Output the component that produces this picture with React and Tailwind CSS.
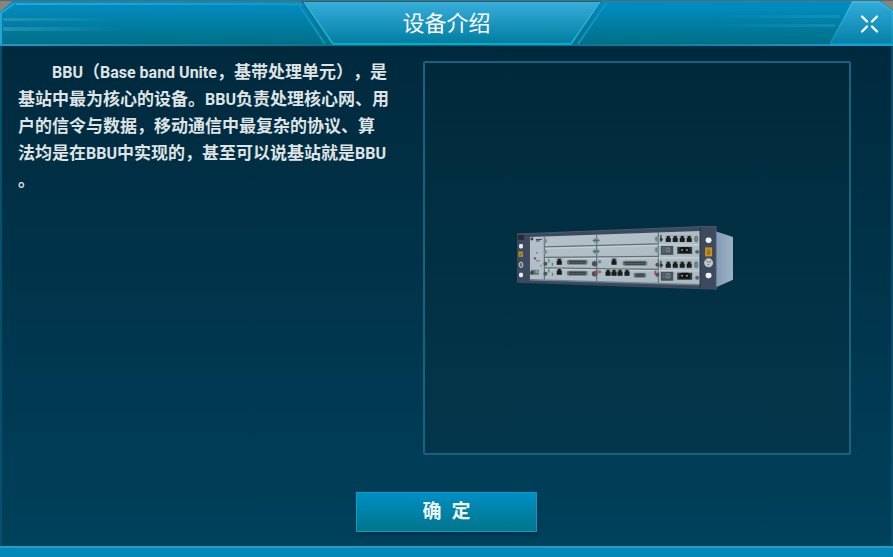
const earParts = [
  { y: 246, kind: 'screw' },
  { y: 254, kind: 'label' },
  { y: 265, kind: 'ring' },
  { y: 275, kind: 'screw' },
]

const rightModules = [0, 26]

function Connector({ x, y, width }) {
  return (
    <g>
      <rect x={x} y={y} width={width} height="5" rx="2" fill="#6d7b82" />
      <rect x={x + 2} y={y + 1} width={width - 4} height="3" rx="1" fill="#303a3e" />
      <path d={`M${x + 3} ${y + 2.5}h${width - 6}`} stroke="#9aa59f" strokeWidth="0.8" strokeDasharray="1 1" />
    </g>
  )
}

function Port({ x, y, size = 5 }) {
  return (
    <g>
      <rect x={x - 0.5} y={y - 1} width={size + 1} height={size + 2} fill="#98a6a5" />
      <path d={`M${x} ${y + 2}h1v-2h${size - 2}v2h1v${size - 1}h-${size}z`} fill="#171e22" />
    </g>
  )
}

function BbuDevice() {
  return (
    <svg viewBox="516 226 217 65" className="w-[54%]" role="img" aria-label="BBU">
      <defs>
        <linearGradient id="side" x1="0" x2="1">
          <stop offset="0" stopColor="#8199b2" />
          <stop offset="1" stopColor="#9db2c8" />
        </linearGradient>
        <linearGradient id="plate" x1="0" x2="1" y2="1">
          <stop offset="0" stopColor="#b4c3c9" />
          <stop offset="1" stopColor="#abbac1" />
        </linearGradient>
      </defs>
      <path d="M715 231L733 237V280L715 288z" fill="url(#side)" />
      <path d="M516 234L716 226V290L516 283z" fill="#3d4a5e" />
      <path d="M516 234L716 226V290" fill="none" stroke="#536277" strokeWidth="0.8" />
      <path d="M529 237L700 231V285L529 280z" fill="url(#plate)" />
      <path d="M543 247L658 244M543 257.500L658 256.500M543 268L658 269.500" stroke="#617078" strokeWidth="1.200" fill="none" />
      <path d="M543 248.500L658 245.500M543 259L658 258M543 269.500L658 271" stroke="#ced8da" strokeWidth="0.800" fill="none" />
      <path d="M543.500 237V280M596 235V282M658 232V284" stroke="#647681" strokeWidth="1.200" />
      <path d="M658 245H700M658 258H700M658 271H700" stroke="#d0d8dc" strokeWidth="1" />
      <path d="M529 280L700 285" stroke="#738089" strokeWidth="1.500" />

      <rect x="517" y="235" width="6" height="5" fill="#232c33" />
      {earParts.map((part) => (
        <g key={part.y}>
          {part.kind === 'screw' && <rect x="518" y={part.y - 2} width="4" height="4.500" rx="1.500" fill="#e6edf0" />}
          {part.kind === 'label' && <rect x="517.500" y={part.y - 2.5} width="4.500" height="5.500" fill="#b38b2c" />}
          {part.kind === 'ring' && <ellipse cx="520" cy={part.y} rx="1.800" ry="2.800" fill="#5f6b70" stroke="#c4cecf" />}
        </g>
      ))}
      <path d="M519 256l2-3" stroke="#705a24" />

      <circle cx="531" cy="239" r="1.500" fill="#354349" />
      <path d="M535 239.500h6M535 241h4" stroke="#39464d" strokeWidth="1" />
      <circle cx="536" cy="253" r="1" fill="#7a8b93" />
      <circle cx="534" cy="258.500" r="1.200" fill="#853f4c" />
      <path d="M535 261h4M539 266h2" stroke="#697980" />
      <rect x="530" y="270" width="8" height="5" fill="#65757d" />
      <circle cx="531" cy="273" r="2" fill="#3d4a51" />
      <circle cx="536" cy="272" r="1.500" fill="#8d9ca1" />

      {[241, 252].map((y) => (
        <g key={y} fill="#71838c" stroke="#8c9da5" strokeWidth="0.800">
          <ellipse cx="544.500" cy={y} rx="1.500" ry="2" />
          <ellipse cx="595.500" cy={y - 0.5} rx="3" ry="2.200" />
          <ellipse cx="656.500" cy={y - 2} rx="2" ry="2.500" />
          <path d={`M592 ${y - 0.5}h7`} stroke="#52656f" />
        </g>
      ))}
      {[264, 274].map((y) => (
        <g key={y} fill="#4a5358">
          <circle cx="544.500" cy={y} r="2" />
          <circle cx="594" cy={y} r="2.800" />
          <circle cx="599" cy={y - 2} r="1.800" fill="#738089" />
          <circle cx="657" cy={y + 1} r="2" />
          <path d={`M548 ${y - 5}v4M551.500 ${y - 1}v3`} stroke="#65757d" strokeWidth="1.200" />
        </g>
      ))}
      <path d="M596 270v5M655 271v4" stroke="#bd3d5b" strokeWidth="2" />

      <Port x={556} y={259} />
      <Port x={556} y={269} />
      <Port x={611} y={259} />
      <Connector x={566} y={260} width={21} />
      <Connector x={566} y={271} width={21} />
      <Connector x={622} y={261} width={25} />
      {[605, 611, 617, 624].map((x) => <Port key={x} x={x} y={270} />)}
      <Connector x={633} y={273} width={13} />

      {rightModules.map((dy) => (
        <g key={dy} transform={`translate(0 ${dy})`}>
          <path d="M660.500 235v7" stroke="#59656c" strokeWidth="2" />
          <circle cx="661" cy="239.500" r="1.500" fill="#303a40" />
          {[665.5, 672.5, 679.5, 686.5].map((x) => <Port key={x} x={x} y={236} />)}
          <ellipse cx="696" cy="239" rx="1.500" ry="3" fill="#7d8e98" stroke="#4b5c66" strokeWidth="0.800" />
          <rect x="660.500" y="246" width="12.500" height="9" fill="#48545d" />
          <path d="M662 248h8M662 250h3M662 252h8" stroke="#6b7980" strokeWidth="0.800" />
          <circle cx="668" cy="250" r="1.800" fill="none" stroke="#9ba5a6" strokeWidth="0.800" />
          <path d="M677 247h15v7h-15z" fill="#30373a" />
          <path d="M679 249l2-2h7l2 2v4h-11z" fill="#111719" />
          <path d="M681 250h1.500M686 250h1.500" stroke="#d5c395" strokeWidth="1.500" />
          <circle cx="697" cy="252" r="2" fill="#56646c" />
        </g>
      ))}
      <path d="M700 227V288" stroke="#29343f" strokeWidth="1.200" />
      <rect x="705.500" y="237.500" width="6" height="5.500" rx="2.500" fill="#edf2f4" />
      <rect x="705" y="247.500" width="7" height="9" fill="#c8941c" />
      <path d="M707 250h3M707 252h3l-3 2h3" stroke="#836119" fill="none" />
      <circle cx="708.500" cy="263" r="4.500" fill="#bdc7cb" />
      <path d="M706 260.500l2 2 3-1M707 265.500l2-1" stroke="#717c7e" fill="none" />
      <rect x="705.500" y="273" width="6" height="5.500" rx="2.500" fill="#edf2f4" />
    </svg>
  )
}

function TitlePlate() {
  return (
    <svg viewBox="287 0 320 45" className="absolute top-0 left-1/2 h-[45px] w-[320px] -translate-x-1/2" aria-hidden="true">
      <defs>
        <linearGradient id="title-fill" x2="0" y2="1">
          <stop stopColor="#37aedb" />
          <stop offset="1" stopColor="#007da0" />
        </linearGradient>
        <linearGradient id="title-line" x2="0" y2="1">
          <stop stopColor="#35add8" />
          <stop offset="1" stopColor="#0bbdd2" />
        </linearGradient>
      </defs>
      <path d="M287 4h12L325 43M607 4h-2L578 43" stroke="#1593bf" strokeWidth="2" fill="none" />
      <path d="M301 0L331 44H573L602 0z" fill="#006e8c" />
      <path d="M304 1L333 43H571L600 1z" fill="url(#title-fill)" />
      <path d="M304 1L333 43H571L600 1" fill="none" stroke="url(#title-line)" strokeWidth="1.500" />
    </svg>
  )
}

function CloseButton() {
  return (
    <button type="button" aria-label="关闭" className="relative h-[45px] w-[63px] cursor-pointer">
      <svg viewBox="830 1 63 45" className="h-full w-full" aria-hidden="true">
        <defs>
          <linearGradient id="close-fill" x2="0" y2="1">
            <stop stopColor="#31add9" />
            <stop offset="1" stopColor="#047fa7" />
          </linearGradient>
          <linearGradient id="close-edge" x2="0" y2="1">
            <stop stopColor="#35bce9" />
            <stop offset="1" stopColor="#138caf" />
          </linearGradient>
        </defs>
        <path d="M852 1H879L893 11V45H830z" fill="url(#close-fill)" />
        <path d="M830 44L853 2H879L892 11V44" fill="none" stroke="url(#close-edge)" strokeWidth="1.500" />
        <path d="M830 44.500H893" stroke="#12a2d5" strokeWidth="2" />
        <path d="M879 0h14v10z" fill="#858580" />
        <path d="M862 16.500l5 5M872 26.500l5 5M877 16.500l-5 5M867 26.500l-5 5" stroke="#fff" strokeWidth="2.400" strokeLinecap="round" />
      </svg>
    </button>
  )
}

function Header() {
  return (
    <header className="relative flex h-[46px] justify-between border-t border-[#626667] bg-linear-to-b from-[#008fc5] to-[#006e85]">
      <div className="absolute inset-x-0 bottom-0 h-0.5 bg-linear-to-r from-[#169dcd] via-[#006780] to-[#12a2d5]" />
      <div className="absolute inset-x-4 top-[2px] h-0.5 bg-linear-to-r from-[#28a8d8] via-[#078dbd] to-[#0089bd]" />
      <TitlePlate />
      <svg viewBox="0 1 130 45" className="relative h-[45px] w-[130px]" aria-hidden="true">
        <defs>
          <linearGradient id="streak-left">
            <stop stopColor="#329ab6" stopOpacity="0.700" />
            <stop offset="1" stopColor="#329ab6" stopOpacity="0" />
          </linearGradient>
        </defs>
        <path d="M0 0H14L0 12z" fill="#858580" />
        <path d="M1 44V13L15 3" fill="none" stroke="#24a5d5" strokeWidth="2" />
        <path d="M3 18h117v3H3zM3 27h117v4H3z" fill="url(#streak-left)" />
      </svg>
      <h1 className="absolute inset-0 flex items-center justify-center pb-1 font-['Noto_Sans_CJK_SC',sans-serif] text-[22px] font-normal text-white">
        设备介绍
      </h1>
      <div className="relative flex">
        <div className="-mr-5 flex w-[140px] flex-col gap-[6px] pt-[14px] pr-[10px]">
          <div className="h-[3px] bg-linear-to-r from-transparent to-[#289abc]/50" />
          <div className="mr-[5px] h-[3px] bg-linear-to-r from-transparent to-[#289abc]/50" />
        </div>
        <CloseButton />
      </div>
    </header>
  )
}

function Latin({ children }) {
  return <span className="text-[16px] leading-none">{children}</span>
}

export default function App() {
  return (
    <div className="flex min-h-screen flex-col bg-[#00293d] font-[Roboto,'Noto_Sans_CJK_SC',sans-serif]">
      <Header />
      <main className="flex flex-1 flex-col items-center border-x-2 border-[#06506e] bg-linear-to-b from-[#00293d] to-[#00415b] px-4 pt-[15px] pb-[14px]">
        <div className="flex w-full flex-1 pr-6">
          <p className="-mt-[2px] flex-1 indent-[34px] text-[17px] leading-[27px] font-bold whitespace-nowrap text-[#dfe3e4] [text-spacing-trim:space-all]">
            <Latin>BBU</Latin>（<Latin>Base band Unite</Latin>，基带处理单元），是<br />
            基站中最为核心的设备。<Latin>BBU</Latin>负责处理核心网、用<br />
            户的信令与数据，移动通信中最复杂的协议、算<br />
            法均是在<Latin>BBU</Latin>中实现的，甚至可以说基站就是<Latin>BBU</Latin><br />
            。
          </p>
          <div className="flex w-[428px] max-w-[52%] items-center justify-center rounded-xs border-2 border-[#18637f] bg-linear-to-b from-[#002a3b] to-[#04364b] pr-6">
            <BbuDevice />
          </div>
        </div>
        <button
          type="button"
          className="mt-[37px] flex h-10 w-[181px] cursor-pointer items-center justify-center gap-[10px] border border-[#00a0cb] bg-linear-to-b from-[#008fc4] to-[#00758b] text-[19px] font-bold text-[#edf5f7] shadow-[1px_2px_3px_#002c40]"
        >
          <span>确</span>
          <span>定</span>
        </button>
      </main>
      <footer className="h-[11px] border-t-2 border-[#249cc8] bg-[#0088b8]" />
    </div>
  )
}
